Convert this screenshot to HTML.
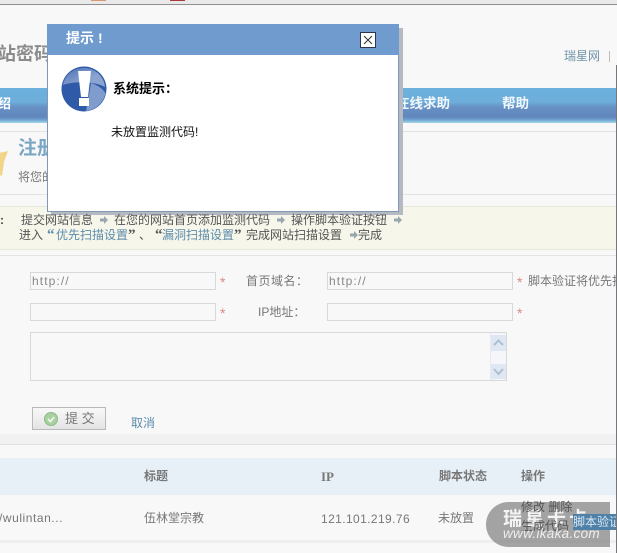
<!DOCTYPE html>
<html><head><meta charset="utf-8">
<style>
html,body{margin:0;padding:0}
body{width:617px;height:553px;overflow:hidden;position:relative;background:#f8f8f9;font-family:"Liberation Sans","Noto Sans CJK SC",sans-serif;font-size:12px;color:#666}
.a{position:absolute;white-space:nowrap;line-height:1}
.b{position:absolute}
.in{position:absolute;box-sizing:border-box;border:1px solid #d8d8d8;background:#f8f8f8;height:18px;width:186px;color:#888;font-size:12px;line-height:16px;padding-left:1px;letter-spacing:1.100px}
.st{color:#d88;font-size:14px}
.l{color:#5d8cab}
.t{color:#555;z-index:5}
.ar{position:absolute;z-index:5}
</style></head><body>
<div class="b" style="left:0;top:0;width:617px;height:4px;background:#e9e9e9"></div>
<div class="b" style="left:0;top:4px;width:617px;height:1px;background:#8f8f92"></div>
<div class="b" style="left:91px;top:0;width:15px;height:1px;background:#d59a70"></div>
<div class="b" style="left:170px;top:0;width:15px;height:1px;background:#a83a3a"></div>
<div class="a" style="left:-2px;top:45px;font-size:18px;font-weight:bold;color:#8c8c8c">站密码</div>
<div class="a" style="left:564px;top:50px;color:#6f93a8">瑞星网</div>
<div class="b" style="left:609px;top:51px;width:1px;height:11px;background:#c8b8b0"></div>
<div class="b" style="left:616px;top:65px;width:1px;height:488px;background:#77777a"></div>
<div class="b" style="left:0;top:88px;width:616px;height:35px;background:linear-gradient(#6cb0dd 0,#6eaedb 14px,#6791c4 19px,#6187bd 29px,#6fa5d0 32px,#a5d8ea 35px)"></div>
<div class="a" style="left:-2px;top:97px;font-size:13px;font-weight:bold;color:#fff">绍</div>
<div class="a" style="left:396px;top:97px;font-size:13.5px;font-weight:bold;color:#f2f7fb">在线求助</div>
<div class="a" style="left:502px;top:97px;font-size:13.5px;font-weight:bold;color:#f2f7fb">帮助</div>
<div class="b" style="left:0;top:131px;width:616px;height:1px;background:#e3e3e3"></div>
<svg class="b" style="left:0;top:148px" width="10" height="30"><path d="M-6 6L8 3L4 14L2 28L-6 24Z" fill="#f2d588"/></svg>
<div class="a" style="left:18px;top:139px;font-size:19px;font-weight:bold;color:#7aa6c4">注册</div>
<div class="a" style="left:18px;top:171px;color:#777">将您的</div>
<div class="b" style="left:0;top:194px;width:616px;height:1px;background:#e4e4e4"></div>
<div class="b" style="left:0;top:206px;width:616px;height:44px;box-sizing:border-box;background:#f6f6ea;border-top:1px solid #e8e8d8;border-bottom:1px solid #e8e8d8"></div>
<div class="b" style="left:0;top:255px;width:616px;height:1px;background:#e4e4e4"></div>
<div class="a t" style="left:0;top:214px;color:#444;font-weight:bold">:</div>
<div class="a t" style="left:21px;top:214px">提交网站信息</div>
<div class="a t" style="left:114px;top:214px">在您的网站首页添加监测代码</div>
<div class="a t" style="left:291px;top:214px">操作脚本验证按钮</div>
<svg class="ar" style="left:100px;top:216px" width="8" height="8"><path d="M0 2.500H4V0L8 4L4 8V5.500H0Z" fill="#9aa6ae"/></svg>
<svg class="ar" style="left:277px;top:216px" width="8" height="8"><path d="M0 2.500H4V0L8 4L4 8V5.500H0Z" fill="#9aa6ae"/></svg>
<svg class="ar" style="left:394px;top:216px" width="8" height="8"><path d="M0 2.500H4V0L8 4L4 8V5.500H0Z" fill="#9aa6ae"/></svg>
<svg class="ar" style="left:350px;top:231px" width="8" height="8"><path d="M0 2.500H4V0L8 4L4 8V5.500H0Z" fill="#9aa6ae"/></svg>
<div class="a t" style="left:19px;top:229px">进入</div>
<div class="a t" style="left:47px;top:229px;font-family:'Liberation Serif',serif;font-size:15px;line-height:12px;font-weight:bold;color:#5d8cab">“</div>
<div class="a t l" style="left:56px;top:229px;color:#5d8cab">优先扫描设置</div>
<div class="a t" style="left:128px;top:229px;font-family:'Liberation Serif',serif;font-size:15px;line-height:12px;font-weight:bold">”</div>
<div class="a t" style="left:139px;top:229px">、</div>
<div class="a t" style="left:155px;top:229px;font-family:'Liberation Serif',serif;font-size:15px;line-height:12px;font-weight:bold">“</div>
<div class="a t" style="left:162px;top:229px;color:#5d8cab">漏洞扫描设置</div>
<div class="a t" style="left:234px;top:229px;font-family:'Liberation Serif',serif;font-size:15px;line-height:12px;font-weight:bold">”</div>
<div class="a t" style="left:246px;top:229px">完成网站扫描设置</div>
<div class="a t" style="left:358px;top:229px">完成</div>

<div class="in" style="left:30px;top:272px">http://</div>
<div class="a st" style="left:220px;top:275px">*</div>
<div class="a" style="left:246px;top:275px;color:#777;letter-spacing:.5px">首页域名：</div>
<div class="in" style="left:327px;top:272px">http://</div>
<div class="a st" style="left:517px;top:275px">*</div>
<div class="a" style="left:528px;top:275px;color:#777">脚本验证将优先扫描</div>
<div class="in" style="left:30px;top:303px"></div>
<div class="a st" style="left:220px;top:306px">*</div>
<div class="a" style="left:258px;top:306px;color:#777">IP地址：</div>
<div class="in" style="left:327px;top:303px"></div>
<div class="a st" style="left:517px;top:306px">*</div>
<div class="b" style="left:30px;top:332px;width:477px;height:49px;box-sizing:border-box;border:1px solid #d8d8d8;background:#f8f8f8"></div>
<div class="b" style="left:490px;top:333px;width:16px;height:47px;background:#f4f6fa;border-left:1px solid #e8e8ee;box-sizing:border-box"></div>
<svg class="b" style="left:491px;top:335px" width="15" height="45"><rect width="15" height="16" fill="#dfe7f3"/><rect y="29" width="15" height="15" fill="#dfe7f3"/><path d="M3 10L7.500 5.500L12 10M3 34L7.500 39L12 34" fill="none" stroke="#aebfd3" stroke-width="2"/></svg>

<div class="b" style="left:32px;top:407px;width:74px;height:23px;box-sizing:border-box;border:1px solid #b9b9b9;background:linear-gradient(#f8f8f8,#e4e4e4)"></div>
<svg class="b" style="left:43px;top:411px" width="16" height="16"><circle cx="8" cy="8" r="6.500" fill="#a8d0a0" stroke="#8cb88c"/><path d="M5 8L7.500 10.500L11 6" fill="none" stroke="#f2f8f0" stroke-width="1.600"/></svg>
<div class="a" style="left:65px;top:412px;font-size:13px;color:#777">提 交</div>
<div class="a l" style="left:131px;top:417px">取消</div>

<div class="b" style="left:0;top:434px;width:616px;height:10px;background:#f1f1f1;border-bottom:1px solid #e2e2e2"></div>
<div class="b" style="left:0;top:458px;width:616px;height:37px;background:#e7f0f6"></div>
<div class="a" style="left:144px;top:470px;font-weight:bold;color:#777">标题</div>
<div class="a" style="left:321px;top:470px;font-weight:bold;color:#777;font-family:'Liberation Serif',serif;font-size:13px">IP</div>
<div class="a" style="left:439px;top:470px;font-weight:bold;color:#777">脚本状态</div>
<div class="a" style="left:521px;top:470px;font-weight:bold;color:#777">操作</div>
<div class="a" style="left:-1px;top:512px;color:#777;letter-spacing:.55px">/wulintan...</div>
<div class="a" style="left:144px;top:512px;color:#777">伍林堂宗教</div>
<div class="a" style="left:321px;top:513px;color:#777;letter-spacing:.4px">121.101.219.76</div>
<div class="a" style="left:438px;top:512px;color:#777">未放置</div>
<div class="b" style="left:0;top:540px;width:616px;height:3px;background:#eeeeee"></div>

<div class="b" style="left:486px;top:502px;width:124px;height:45px;border-radius:23px 0 0 23px;background:rgba(130,130,130,.72)"></div>
<div class="a" style="left:503px;top:510px;font-size:19px;font-weight:bold;color:#f4f4f4;letter-spacing:3px">瑞星卡卡</div>
<div class="a" style="left:521px;top:501px;color:#555">修改 删除</div>
<div class="a" style="left:521px;top:520px;color:#555">生成代码</div>
<div class="a" style="left:573px;top:514px;width:43px;height:16px;overflow:hidden;background:#4f81a8;color:#dbe8f2;line-height:16px">脚本验证</div>
<div class="a" style="left:503px;top:527px;font-size:13.500px;font-style:italic;color:#eee;letter-spacing:.3px">www.ikaka.com</div>

<div class="b" style="left:51px;top:28px;width:352px;height:187px;background:#b4b9c2"></div>
<div class="b" style="left:47px;top:24px;width:352px;height:188px;box-sizing:border-box;background:#fff;border:1px solid #7d99b6"></div>
<div class="b" style="left:47px;top:24px;width:352px;height:31px;background:#6f9bcf"></div>
<div class="a" style="left:66px;top:31px;font-size:14px;font-weight:bold;color:#fff">提示</div>
<div class="a" style="left:98px;top:31px;font-size:14px;font-weight:bold;color:#fff">!</div>
<div class="b" style="left:360px;top:32px;width:16px;height:16px;box-sizing:border-box;background:#fff;border:1px solid #2a3550"></div>
<svg class="b" style="left:361px;top:33px" width="14" height="14"><path d="M3 3L11 11M11 3L3 11" stroke="#333" stroke-width="1"/></svg>
<svg class="b" style="left:61px;top:66px" width="46" height="46" viewBox="0 0 46 46">
<defs><linearGradient id="g" x1="0" y1="0" x2="1" y2="1"><stop offset="0" stop-color="#4a6fb5"/><stop offset=".6" stop-color="#8aa3cf"/><stop offset="1" stop-color="#8ea7cf"/></linearGradient></defs>
<circle cx="23" cy="23" r="22.500" fill="#2f5aa8"/>
<path d="M2 19C4 8 13 2 23 2C34 2 43 10 44 21C34 15 12 15 2 19Z" fill="url(#g)"/>
<path d="M30 17C36 19 41 22 44.500 27C43 36 35 44 25 45Z" fill="#7f9ccc"/>
<path d="M17 5H30L27 31H20Z" fill="#fff"/>
<rect x="18" y="32" width="10" height="8" fill="#fff"/>
</svg>
<div class="a" style="left:113px;top:82px;font-size:13px;font-weight:bold;color:#000">系统提示：</div>
<div class="a" style="left:111px;top:126px;font-size:12px;color:#111">未放置监测代码!</div>
</body></html>
